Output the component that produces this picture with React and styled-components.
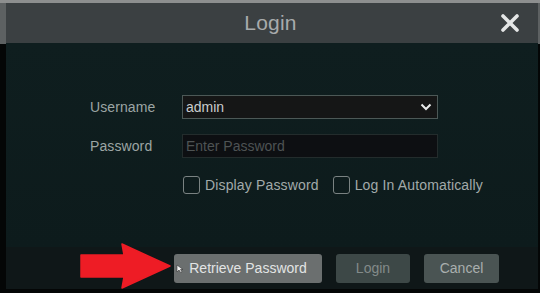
import React from "react";
import styled, { createGlobalStyle } from "styled-components";

const GlobalStyle = createGlobalStyle`
  html, body {
    margin: 0;
    padding: 0;
    background: #060808;
  }
  body {
    font-family: "Liberation Sans", Arial, sans-serif;
  }
`;

const Screen = styled.div`
  position: relative;
  width: 540px;
  height: 293px;
  overflow: hidden;
  box-sizing: border-box;
  padding: 3px 2px 4px 6px;
  background: linear-gradient(
    to bottom,
    #8d8f8f 0px,
    #8d8f8f 3px,
    #5d6162 3px,
    #5d6162 44px,
    #040606 44px
  );
`;

const Dialog = styled.div`
  display: flex;
  flex-direction: column;
  height: 100%;
  background: #0e1c1d;
`;

const TitleBar = styled.div`
  position: relative;
  height: 40px;
  flex: none;
  display: flex;
  align-items: center;
  justify-content: center;
  background: #3b4042;
`;

const Title = styled.div`
  font-size: 21px;
  color: #a8abac;
  letter-spacing: 0.2px;
  margin-right: 3px;
`;

const CloseButton = styled.div`
  position: absolute;
  right: 18px;
  top: 10px;
  width: 20px;
  height: 20px;
  display: flex;
`;

const Body = styled.div`
  flex: 1;
  display: flex;
  flex-direction: column;
  padding: 52px 0 0 84px;
  background: linear-gradient(to bottom, #0f1e1f, #0d1b1c);
`;

const Row = styled.div`
  display: flex;
  align-items: center;
  height: 24px;
  margin-bottom: ${(p) => p.$gap || 15}px;
`;

const Label = styled.div`
  width: 92px;
  font-size: 14px;
  color: #9ca5a4;
  letter-spacing: 0.1px;
`;

const Select = styled.div`
  width: 256px;
  height: 24px;
  box-sizing: border-box;
  display: flex;
  align-items: center;
  justify-content: space-between;
  padding: 0 5px 0 3px;
  background: #151616;
  border: 1px solid #4c5856;
  font-size: 14px;
  color: #c9cccc;
`;

const Input = styled.div`
  width: 256px;
  height: 24px;
  box-sizing: border-box;
  display: flex;
  align-items: center;
  padding: 0 3px;
  background: #0d0f12;
  border: 1px solid #232c2c;
  font-size: 14px;
  color: #4e5354;
`;

const Checks = styled.div`
  display: flex;
  align-items: center;
  margin-left: 93px;
  height: 20px;
`;

const Check = styled.div`
  display: flex;
  align-items: center;
  margin-right: 14px;
  font-size: 14px;
  color: #a2aaaa;
  letter-spacing: 0.15px;
`;

const Box = styled.span`
  width: 15px;
  height: 16px;
  border: 1px solid #7a8282;
  border-radius: 3px;
  margin-right: 5px;
`;

const Footer = styled.div`
  height: 42px;
  flex: none;
  display: flex;
  align-items: center;
  justify-content: flex-end;
  gap: 14px;
  padding: 0 39px 0 0;
  background: #0f1718;
`;

const Button = styled.div`
  width: ${(p) => p.$w}px;
  height: 29px;
  display: flex;
  align-items: center;
  justify-content: center;
  border-radius: 3px;
  font-size: 14px;
  background: ${(p) => p.$bg};
  color: ${(p) => p.$fg};
`;

const Arrow = styled.svg`
  position: absolute;
  left: 80px;
  top: 243px;
`;

const Cursor = styled.svg`
  position: absolute;
  left: 176px;
  top: 264px;
`;

export default function App() {
  return (
    <>
      <GlobalStyle />
      <Screen>
        <Dialog>
          <TitleBar>
            <Title>Login</Title>
            <CloseButton>
              <svg width="20" height="20" viewBox="0 0 20 20">
                <path
                  d="M3 3 L17 17 M17 3 L3 17"
                  stroke="#e4e6e6"
                  strokeWidth="3.6"
                  strokeLinecap="round"
                />
              </svg>
            </CloseButton>
          </TitleBar>
          <Body>
            <Row>
              <Label>Username</Label>
              <Select>
                admin
                <svg width="12" height="8" viewBox="0 0 12 8">
                  <path
                    d="M1.5 1.5 L6 6 L10.5 1.5"
                    fill="none"
                    stroke="#e8eaea"
                    strokeWidth="2"
                  />
                </svg>
              </Select>
            </Row>
            <Row $gap={17}>
              <Label>Password</Label>
              <Input>Enter Password</Input>
            </Row>
            <Checks>
              <Check>
                <Box />
                Display Password
              </Check>
              <Check>
                <Box />
                Log In Automatically
              </Check>
            </Checks>
          </Body>
          <Footer>
            <Button $w={148} $bg="#6b6f6f" $fg="#e2e4e4">
              Retrieve Password
            </Button>
            <Button $w={74} $bg="#3d4847" $fg="#838b8a">
              Login
            </Button>
            <Button $w={75} $bg="#4a5453" $fg="#a9afae">
              Cancel
            </Button>
          </Footer>
        </Dialog>
        <Arrow width="92" height="46" viewBox="0 0 92 46">
          <path
            d="M1 12 L44 12 L42 1 L90 23 L42 45 L44 34 L1 34 Z"
            fill="#ee1c25"
            stroke="#ee1c25"
            strokeLinejoin="round"
            strokeWidth="1.5"
          />
        </Arrow>
        <Cursor width="9" height="10" viewBox="0 0 9 10">
          <path d="M1 1 L1 8 L3 6 L5 9 L6 8 L4.5 5.5 L7 5.5 Z" fill="#f2f2f2" stroke="#333" strokeWidth="0.6" />
        </Cursor>
      </Screen>
    </>
  );
}
